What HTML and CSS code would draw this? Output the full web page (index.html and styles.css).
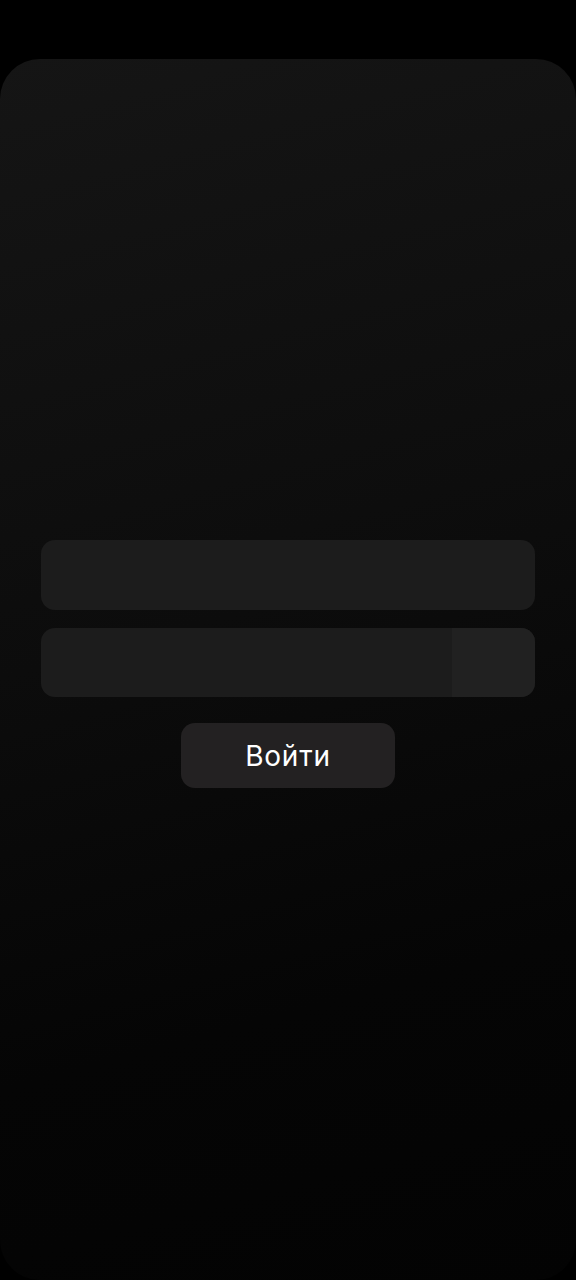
FILE: index.html
```html
<!DOCTYPE html>
<html lang="ru">
<head>
    <meta charset="UTF-8">
    <meta name="viewport" content="width=device-width, initial-scale=1.0">
    <title>Вход</title>
    <link rel="stylesheet" href="styles.css">
</head>
<body>
    <div class="login-card">
        <!-- Login form -->
        <form class="login-form">
            <div class="field">
                <input type="text" class="field-input" aria-label="Логин">
            </div>
            <div class="field field-password">
                <input type="password" class="field-input" aria-label="Пароль">
                <button type="button" class="toggle-btn" aria-label="Показать пароль"></button>
            </div>
            <button type="submit" class="login-btn">Войти</button>
        </form>
    </div>
</body>
</html>
```

FILE: styles.css
```css
html, body {
    margin: 0;
    padding: 0;
    background: #000;
}

body {
    padding-top: 59px;
    font-family: Inter, "Noto Sans", sans-serif;
}

/* Styling the main card */
.login-card {
    height: 1221px;
    box-sizing: border-box;
    border-radius: 40px;
    background: linear-gradient(165deg, #151515 0%, #0c0c0c 45%, #050505 75%, #030303 100%);
    padding: 481px 41px 0 41px;
}

/* Styling the form */
.login-form {
    display: flex;
    flex-direction: column;
    align-items: center;
}

.field {
    width: 100%;
    height: 70px;
    display: flex;
    border-radius: 14px;
    overflow: hidden;
    background: #1c1c1c;
    margin-bottom: 18px;
}

.field-password {
    height: 69px;
}

.field-input {
    flex: 1;
    min-width: 0;
    background: transparent;
    border: none;
    outline: none;
    color: #fff;
    font-size: 18px;
    padding: 0 18px;
}

.toggle-btn {
    width: 83px;
    border: none;
    background: #212121;
    cursor: pointer;
}

/* Styling the login button */
.login-btn {
    margin-top: 8px;
    width: 214px;
    height: 65px;
    border: none;
    border-radius: 14px;
    background: #232122;
    color: #fff;
    font-family: Inter, "Noto Sans", sans-serif;
    font-size: 28px;
    letter-spacing: 0.8px;
    padding: 0;
    cursor: pointer;
}
```
